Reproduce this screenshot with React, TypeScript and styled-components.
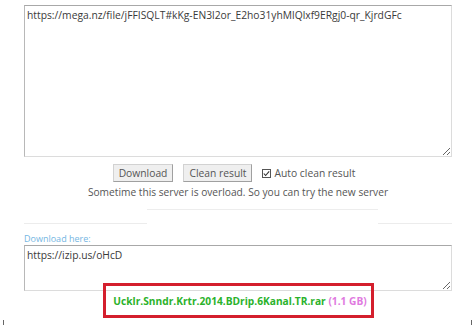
import React from "react";
import styled, { createGlobalStyle } from "styled-components";

const Global = createGlobalStyle`
  html, body { margin: 0; padding: 0; background: #fff; }
  body { font-family: "Open Sans", "DejaVu Sans", sans-serif; color: #333; }
`;

const Page = styled.div`
  width: 474px;
  height: 325px;
  box-sizing: border-box;
  padding: 5px 22px 0 24px;
  position: relative;
  overflow: hidden;
`;

const Area = styled.textarea<{ $h: number }>`
  display: block;
  box-sizing: border-box;
  width: 428px;
  height: ${(p) => p.$h}px;
  margin: 0;
  padding: 2px 2px;
  resize: vertical;
  font-family: "Open Sans", sans-serif;
  font-size: 10.3px;
  line-height: 15px;
  color: #3a3a3a;
  border: 1px solid #dcdcdc;
  border-top-color: #a8a8a8;
  border-left-color: #b8b8b8;
  outline: none;
  background: #fff;
`;

const Controls = styled.div`
  display: flex;
  justify-content: center;
  align-items: center;
  gap: 10px;
  height: 18px;
  margin-top: 7px;
  padding-right: 8px;
`;

const Btn = styled.button`
  height: 18px;
  padding: 0 5px;
  font-family: "Open Sans", sans-serif;
  font-size: 10.3px;
  color: #555;
  background: #efefef;
  border: 1px solid #d2d2d2;
  border-right-color: #a0a0a0;
  border-bottom-color: #a0a0a0;
  border-radius: 0;
  line-height: 16px;
`;

const Check = styled.label`
  display: flex;
  align-items: center;
  gap: 3px;
  font-size: 10.3px;
  color: #555;
`;

const Note = styled.div`
  text-align: center;
  font-size: 10.2px;
  line-height: 14px;
  color: #555;
  margin-top: 3px;
`;

const Sep = styled.div`
  display: flex;
  margin-top: 10px;
  height: 15px;
`;

const SepLine = styled.div<{ $w: number }>`
  width: ${(p) => p.$w}px;
  border-bottom: 1px solid #ececec;
`;

const SepBox = styled.div`
  width: 231px;
  border-top: 1px solid #ededed;
`;

const Label = styled.div`
  margin-top: 8px;
  font-size: 9px;
  line-height: 13px;
  color: #74b6e2;
`;

const Result = styled.div`
  margin-top: 2px;
  text-align: center;
  font-size: 10.2px;
  font-weight: 700;
  line-height: 16px;
  padding-left: 4px;
`;

const Name = styled.span`
  color: #2bb22b;
`;

const Size = styled.span`
  color: #e07ae0;
`;

const Frame = styled.div`
  position: absolute;
  left: 103px;
  top: 283px;
  width: 271px;
  height: 35px;
  box-sizing: border-box;
  border: 3px solid #d41f2d;
  pointer-events: none;
`;

const Tick = styled.div<{ $left: number }>`
  position: absolute;
  left: ${(p) => p.$left}px;
  top: 320px;
  width: 1px;
  height: 5px;
  background: #666;
`;

export default function App() {
  return (
    <>
      <Global />
      <Page>
        <Area
          $h={152}
          readOnly
          value="https://mega.nz/file/jFFISQLT#kKg-EN3l2or_E2ho31yhMlQlxf9ERgj0-qr_KjrdGFc"
        />
        <Controls>
          <Btn>Download</Btn>
          <Btn>Clean result</Btn>
          <Check>
            <svg width="9" height="9" viewBox="0 0 9 9">
              <rect x="0.5" y="0.5" width="8" height="8" fill="#fff" stroke="#555" />
              <path d="M1.8 4.5 L3.6 6.5 L7.2 2.3" fill="none" stroke="#333" strokeWidth="1.1" />
            </svg>
            Auto clean result
          </Check>
        </Controls>
        <Note>Sometime this server is overload. So you can try the new server</Note>
        <Sep>
          <SepLine $w={123} />
          <SepBox />
          <SepLine $w={74} />
        </Sep>
        <Label>Download here:</Label>
        <Area $h={46} readOnly value="https://izip.us/oHcD" />
        <Result>
          <Name>Ucklr.Snndr.Krtr.2014.BDrip.6Kanal.TR.rar</Name> <Size>(1.1 GB)</Size>
        </Result>
        <Frame />
        <Tick $left={3} />
        <Tick $left={471} />
      </Page>
    </>
  );
}
